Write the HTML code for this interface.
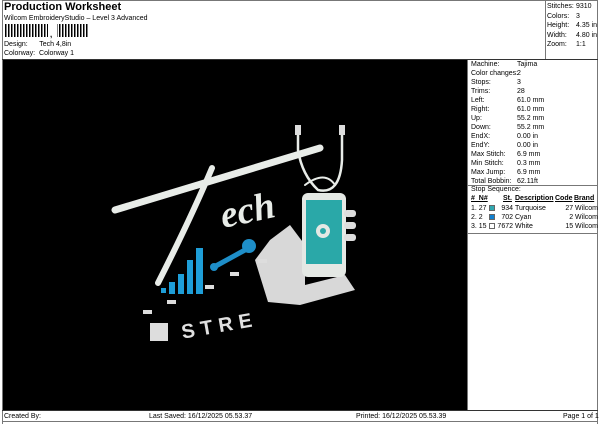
<!DOCTYPE html>
<html><head><meta charset="utf-8"><style>
*{margin:0;padding:0;box-sizing:border-box}
body{width:600px;height:424px;background:#fff;font-family:"Liberation Sans",sans-serif;font-size:7px;color:#000;position:relative;overflow:hidden}
.a{position:absolute;white-space:nowrap}
.l{position:absolute;background:#777}
</style></head><body>
<div class="l" style="left:2px;top:0;width:1px;height:424px"></div>
<div class="l" style="left:597px;top:0;width:1px;height:424px"></div>
<div class="l" style="left:2px;top:0;width:596px;height:1px"></div>
<div class="a" style="left:4px;top:1px;font-size:11px;font-weight:bold">Production Worksheet</div>
<div class="a" style="left:4px;top:15px">Wilcom EmbroideryStudio – Level 3 Advanced</div>
<div class="a" style="left:5px;top:24px;height:13px;width:84px;background:repeating-linear-gradient(90deg,#000 0 1.5px,#fff 1.5px 3px)"></div>
<div class="a" style="left:48px;top:24px;height:13px;width:9px;background:#fff"></div>
<div class="a" style="left:50px;top:30px;font-size:8px;font-weight:bold">,</div>
<div class="a" style="left:4px;top:41px">Design:&nbsp;&nbsp;&nbsp;&nbsp;&nbsp; Tech 4,8in</div>
<div class="a" style="left:4px;top:50px">Colorway:&nbsp; Colorway 1</div>
<div class="l" style="left:545px;top:0;width:1px;height:59px"></div>
<div class="a" style="left:547px;top:2px;line-height:9.6px">Stitches:<br>Colors:<br>Height:<br>Width:<br>Zoom:</div>
<div class="a" style="left:576px;top:2px;line-height:9.6px">9310<br>3<br>4.35 in<br>4.80 in<br>1:1</div>
<div class="a" style="left:2px;top:59px;width:596px;height:1px;background:#333"></div>
<div class="a" style="left:3px;top:60px;width:464px;height:350px;background:#000"></div>
<div class="l" style="left:467px;top:60px;width:1px;height:350px"></div>
<div class="a" style="left:471px;top:60px;line-height:9px">Machine:<br>Color changes:<br>Stops:<br>Trims:<br>Left:<br>Right:<br>Up:<br>Down:<br>EndX:<br>EndY:<br>Max Stitch:<br>Min Stitch:<br>Max Jump:<br>Total Bobbin:</div>
<div class="a" style="left:517px;top:60px;line-height:9px">Tajima<br>2<br>3<br>28<br>61.0 mm<br>61.0 mm<br>55.2 mm<br>55.2 mm<br>0.00 in<br>0.00 in<br>6.9 mm<br>0.3 mm<br>6.9 mm<br>62.11ft</div>
<div class="l" style="left:468px;top:185px;width:130px;height:1px"></div>
<div class="a" style="left:471px;top:186px">Stop Sequence:</div>
<div class="a" style="left:471px;top:195px;font-weight:bold;text-decoration:underline">#&nbsp; N#</div>
<div class="a" style="left:503px;top:195px;font-weight:bold;text-decoration:underline">St.</div>
<div class="a" style="left:515px;top:195px;font-weight:bold;text-decoration:underline">Description</div>
<div class="a" style="left:555px;top:195px;font-weight:bold;text-decoration:underline">Code</div>
<div class="a" style="left:574px;top:195px;font-weight:bold;text-decoration:underline">Brand</div>
<div class="a" style="left:471px;top:204px;line-height:9px">1. 27<br>2. 2<br>3. 15</div>
<div class="a" style="left:489px;top:205px;width:6px;height:6px;background:#30a8b0;border:1px solid #666"></div>
<div class="a" style="left:489px;top:214px;width:6px;height:6px;background:#1080d0;border:1px solid #666"></div>
<div class="a" style="left:489px;top:223px;width:6px;height:6px;background:#fff;border:1px solid #666"></div>
<div class="a" style="left:496px;top:204px;line-height:9px;text-align:right;width:17px">934<br>702<br>7672</div>
<div class="a" style="left:515px;top:204px;line-height:9px">Turquoise<br>Cyan<br>White</div>
<div class="a" style="left:550px;top:204px;line-height:9px;text-align:right;width:48px">27 Wilcom<br>2 Wilcom<br>15 Wilcom</div>
<div class="l" style="left:468px;top:233px;width:130px;height:1px"></div>
<div class="a" style="left:2px;top:410px;width:596px;height:1px;background:#333"></div>
<div class="l" style="left:2px;top:421px;width:596px;height:1px"></div>
<div class="a" style="left:4px;top:413px">Created By:</div>
<div class="a" style="left:149px;top:413px">Last Saved: 16/12/2025 05.53.37</div>
<div class="a" style="left:356px;top:413px">Printed: 16/12/2025 05.53.39</div>
<div class="a" style="left:563px;top:413px">Page 1 of 1</div>
<svg class="a" style="left:0;top:0" width="600" height="424">
<g stroke="#e8ece8" fill="none" stroke-linecap="round">
<path d="M115 210 L320 148" stroke-width="7"/>
<path d="M212 168 Q190 220 158 283" stroke-width="6"/>
<path d="M298 130 L298 150 Q302 175 318 190 Q340 195 342 160 L342 130" stroke-width="2.5"/>
<path d="M305 185 Q325 170 335 185" stroke-width="2"/>
</g>
<rect x="295" y="125" width="6" height="10" fill="#ddd"/>
<rect x="339" y="125" width="6" height="10" fill="#ddd"/>
<text x="220" y="222" font-family="Liberation Serif" font-style="italic" font-size="38" fill="#e8ece8" font-weight="bold" transform="rotate(-12 250 210)">ech</text>
<path d="M270 240 L290 225 L305 245 L305 285 L345 275 L355 290 L300 305 L268 302 L255 260 Z" fill="#d8d8d8"/>
<rect x="302" y="193" width="44" height="84" rx="6" fill="#e4e8e4"/>
<rect x="306" y="200" width="36" height="64" fill="#2aa8a8"/>
<circle cx="323" cy="231" r="7" fill="#e4e8e4"/><circle cx="323" cy="231" r="3" fill="#2aa8a8"/>
<rect x="344" y="210" width="12" height="7" rx="3" fill="#ddd"/><rect x="344" y="222" width="12" height="7" rx="3" fill="#ddd"/><rect x="344" y="234" width="12" height="7" rx="3" fill="#ddd"/>
<g fill="#1e9ed8">
<rect x="161" y="288" width="5" height="5"/><rect x="169" y="282" width="6" height="12"/><rect x="178" y="274" width="6" height="20"/><rect x="187" y="260" width="6" height="34"/><rect x="196" y="248" width="7" height="46"/>
</g>
<path d="M214 267 L245 250" stroke="#1e8ec8" stroke-width="5" stroke-linecap="round"/>
<circle cx="249" cy="246" r="7" fill="#1e8ec8"/><circle cx="214" cy="267" r="4" fill="#1e8ec8"/>
<g fill="#ddd"><rect x="143" y="310" width="9" height="4"/><rect x="167" y="300" width="9" height="4"/><rect x="205" y="285" width="9" height="4"/><rect x="230" y="272" width="9" height="4"/><rect x="258" y="259" width="9" height="4"/><rect x="150" y="323" width="18" height="18"/></g>
<text x="180" y="332" font-family="Liberation Sans" font-weight="bold" font-size="20" fill="#e0e0e0" letter-spacing="6" transform="rotate(-10 220 320)">STRE</text>
</svg>
</body></html>
